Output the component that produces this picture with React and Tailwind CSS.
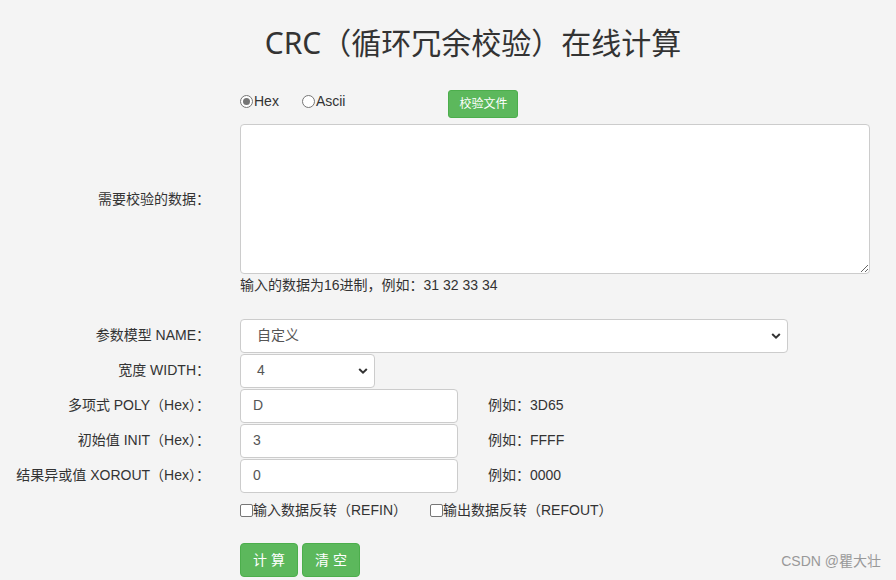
import React from "react";

const font = { fontFamily: '"Liberation Sans", Arial, "Noto Sans CJK SC", sans-serif' };

function Radio({ checked, label }) {
  return (
    <label className="flex items-center">
      <span className="w-[13px] h-[13px] rounded-full border border-[#767676] bg-white flex items-center justify-center">
        {checked && <span className="w-[7px] h-[7px] rounded-full bg-[#767676]" />}
      </span>
      <span className="text-[14px] text-[#333] leading-none ml-[1px]">{label}</span>
    </label>
  );
}

function Check({ label }) {
  return (
    <label className="flex items-center">
      <span className="w-[13px] h-[13px] rounded-[2px] border border-[#767676] bg-white" />
      <span className="text-[14px] text-[#333] leading-none">{label}</span>
    </label>
  );
}

function Chevron() {
  return (
    <svg className="absolute right-[6px] top-1/2 -translate-y-1/2 pointer-events-none" width="10" height="7" viewBox="0 0 10 7">
      <path d="M1.2 1.5 L5 5.2 L8.8 1.5" fill="none" stroke="#333" strokeWidth="2" />
    </svg>
  );
}

function Label({ children, className = "" }) {
  return (
    <div className={"w-[210px] text-right text-[14px] text-[#333] " + className}>{children}</div>
  );
}

function InputRow({ label, value, example }) {
  return (
    <div className="flex items-center h-[35px]">
      <Label>{label}</Label>
      <div className="ml-[30px] w-[218px] h-[34px] bg-white border border-[#ccc] rounded-[4px] flex items-center px-[12px] text-[14px] text-[#555]">
        {value}
      </div>
      <div className="ml-[30px] text-[14px] text-[#333]">{example}</div>
    </div>
  );
}

export default function App() {
  return (
    <div className="w-[896px] h-[580px] bg-[#f4f4f4] overflow-hidden relative" style={font}>
      <h1
        className="text-center pl-[50px] pt-[22px] text-[30px] leading-[42px] text-[#333]"
        style={{ fontFamily: '"Noto Sans", "Noto Sans CJK SC", sans-serif' }}
      >
        CRC（循环冗余校验）在线计算
      </h1>

      <div className="pl-[240px] mt-[26px] flex items-start h-[28px]">
        <div className="mt-[4px] flex">
          <Radio checked label="Hex" />
          <div className="ml-[23px]">
            <Radio label="Ascii" />
          </div>
        </div>
        <button className="ml-[103px] w-[70px] h-[28px] rounded-[3px] bg-[#5cb85c] border border-[#4cae4c] text-white text-[12px]">
          校验文件
        </button>
      </div>

      <div className="flex items-center mt-[6px]">
        <Label>需要校验的数据：</Label>
        <textarea className="ml-[30px] w-[630px] h-[150px] bg-white border border-[#ccc] rounded-[4px] block" />
      </div>
      <div className="pl-[240px] mt-[1px] text-[14px] text-[#333] leading-[20px]">
        输入的数据为16进制，例如：31 32 33 34
      </div>

      <div className="flex items-center mt-[23px] h-[35px]">
        <Label>参数模型 NAME：</Label>
        <div className="ml-[30px] relative w-[548px] h-[34px] bg-white border border-[#ccc] rounded-[4px] flex items-center px-[16px] text-[14px] text-[#555]">
          自定义
          <Chevron />
        </div>
      </div>
      <div className="flex items-center h-[35px]">
        <Label>宽度 WIDTH：</Label>
        <div className="ml-[30px] relative w-[135px] h-[34px] bg-white border border-[#ccc] rounded-[4px] flex items-center px-[16px] text-[14px] text-[#555]">
          4
          <Chevron />
        </div>
      </div>
      <InputRow label="多项式 POLY（Hex）：" value="D" example="例如：3D65" />
      <InputRow label="初始值 INIT（Hex）：" value="3" example="例如：FFFF" />
      <InputRow label="结果异或值 XOROUT（Hex）：" value="0" example="例如：0000" />

      <div className="pl-[240px] mt-[9px] flex items-center h-[16px]">
        <Check label="输入数据反转（REFIN）" />
        <div className="ml-[23px]">
          <Check label="输出数据反转（REFOUT）" />
        </div>
      </div>

      <div className="pl-[240px] mt-[25px] flex gap-[4px]">
        <button className="w-[58px] h-[34px] rounded-[4px] bg-[#5cb85c] border border-[#4cae4c] text-white text-[14px] tracking-[4px] pl-[4px]">
          计算
        </button>
        <button className="w-[58px] h-[34px] rounded-[4px] bg-[#5cb85c] border border-[#4cae4c] text-white text-[14px] tracking-[4px] pl-[4px]">
          清空
        </button>
      </div>

      <div className="absolute right-[15px] bottom-[8px] text-[14px] text-[#999]">CSDN @瞿大壮</div>
    </div>
  );
}
